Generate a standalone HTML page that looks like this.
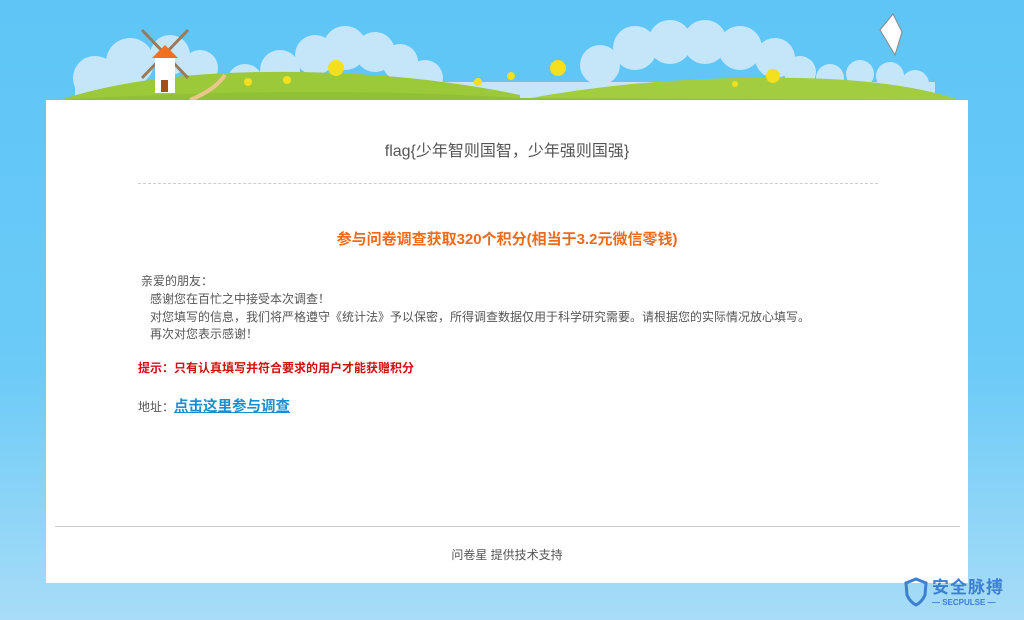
<!DOCTYPE html>
<html><head><meta charset="utf-8"><style>
*{margin:0;padding:0;box-sizing:border-box}
body{width:1024px;height:620px;overflow:hidden;position:relative;background:linear-gradient(#5ec5f6 0%,#6ccbf7 60%,#a8dcf7 100%);font-family:"Liberation Sans","Noto Sans CJK SC",sans-serif;color:#555}
.abs{position:absolute}
.card{left:46px;top:100px;width:922px;height:483px;background:#fff}
.t{white-space:nowrap;font-size:12px;line-height:18px}
</style></head><body>
<svg class="abs" style="left:0;top:0" width="1024" height="102">
<g fill="#c4e6f8">
<circle cx="95" cy="78" r="22"/><circle cx="130" cy="62" r="24"/><circle cx="170" cy="55" r="20"/><circle cx="200" cy="68" r="18"/>
<circle cx="280" cy="70" r="20"/><circle cx="315" cy="55" r="20"/><circle cx="345" cy="48" r="22"/><circle cx="375" cy="52" r="20"/><circle cx="400" cy="62" r="18"/><circle cx="425" cy="78" r="18"/><circle cx="245" cy="82" r="18"/>
<circle cx="600" cy="65" r="20"/><circle cx="635" cy="48" r="22"/><circle cx="670" cy="42" r="22"/><circle cx="705" cy="42" r="22"/><circle cx="740" cy="48" r="22"/><circle cx="775" cy="58" r="20"/><circle cx="800" cy="72" r="16"/>
<circle cx="830" cy="78" r="14"/><circle cx="860" cy="74" r="14"/><circle cx="890" cy="76" r="14"/><circle cx="915" cy="84" r="14"/>
<rect x="75" y="82" width="860" height="20"/>
</g>
<path d="M60 100 Q150 70 300 72 Q420 74 520 95 L520 102 L60 102Z" fill="#9cc93a"/>
<path d="M520 100 Q650 75 800 78 Q900 80 960 100 L960 102 L520 102Z" fill="#a2cd40"/>
<path d="M60 100 Q300 85 520 98 L960 100 L960 102 L60 102Z" fill="#8fc036"/>
<path d="M190 100 Q215 90 225 75" stroke="#e8c88a" stroke-width="4" fill="none"/>
<g stroke="#9a7a5a" stroke-width="3"><line x1="142" y1="30" x2="188" y2="78"/><line x1="188" y1="30" x2="142" y2="78"/></g>
<rect x="155" y="55" width="20" height="38" fill="#fff"/><path d="M152 58 L165 45 L178 58Z" fill="#f07020"/><rect x="161" y="80" width="7" height="12" fill="#a05020"/>
<g fill="#f5e020"><circle cx="336" cy="68" r="8"/><circle cx="558" cy="68" r="8"/><circle cx="773" cy="76" r="7"/><circle cx="248" cy="82" r="4"/><circle cx="287" cy="80" r="4"/><circle cx="478" cy="82" r="4"/><circle cx="511" cy="76" r="4"/><circle cx="735" cy="84" r="3"/></g>
<path d="M880 30 L893 14 L902 32 L895 55Z" fill="#fff" stroke="#888"/>
</svg>
<div class="abs card"></div>
<div class="abs t" style="left:0;width:1014px;text-align:center;top:142px;font-size:16px;line-height:20px;color:#555">flag{少年智则国智，少年强则国强}</div>
<div class="abs" style="left:138px;top:183px;width:740px;border-top:1px dashed #ccc"></div>
<div class="abs t" style="left:0;width:1014px;text-align:center;top:230px;font-size:15px;line-height:20px;font-weight:bold;color:#f06a1a">参与问卷调查获取320个积分(相当于3.2元微信零钱)</div>
<div class="abs t" style="left:141px;top:272px">亲爱的朋友：</div>
<div class="abs t" style="left:150px;top:290px">感谢您在百忙之中接受本次调查！</div>
<div class="abs t" style="left:150px;top:308px">对您填写的信息，我们将严格遵守《统计法》予以保密，所得调查数据仅用于科学研究需要。请根据您的实际情况放心填写。</div>
<div class="abs t" style="left:150px;top:325px">再次对您表示感谢！</div>
<div class="abs t" style="left:138px;top:359px;font-weight:bold;color:#d01010">提示：只有认真填写并符合要求的用户才能获赠积分</div>
<div class="abs t" style="left:138px;top:398px">地址：<span style="font-size:14.5px;font-weight:bold;color:#1a8fd0;text-decoration:underline">点击这里参与调查</span></div>
<div class="abs" style="left:55px;top:526px;width:905px;border-top:1px solid #ccc"></div>
<div class="abs t" style="left:0;width:1014px;text-align:center;top:546px;font-size:12px">问卷星 提供技术支持</div>
<svg class="abs" style="left:904px;top:577px" width="24" height="30"><path d="M12 2 L22 6 L21 18 Q18 25 12 28 Q6 25 3 18 L2 6Z" fill="none" stroke="#3d7fd0" stroke-width="3"/></svg>
<div class="abs t" style="left:932px;top:578px;font-size:17px;line-height:20px;font-weight:bold;color:#3d7fd0;letter-spacing:1px">安全脉搏</div>
<div class="abs t" style="left:932px;top:598px;font-size:8px;line-height:10px;font-weight:bold;color:#3d7fd0">— SECPULSE —</div>
</body></html>
